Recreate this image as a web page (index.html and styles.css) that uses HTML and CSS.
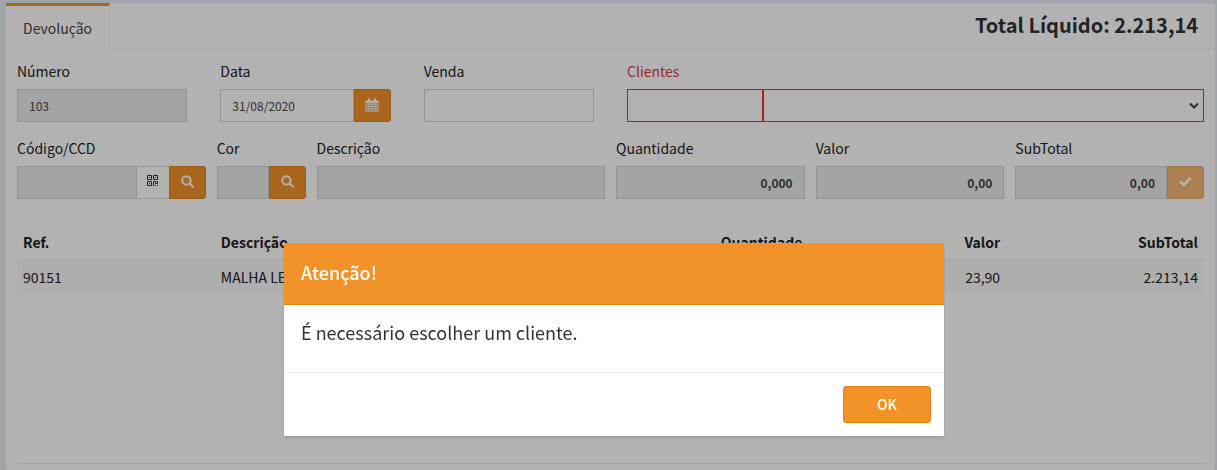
FILE: index.html
```html
<!DOCTYPE html>
<html lang="pt-BR">
<head>
  <meta charset="UTF-8">
  <meta name="viewport" content="width=device-width, initial-scale=1.0">
  <title>Devolução</title>
  <link rel="stylesheet" href="styles.css">
</head>
<body>
  <main class="panel">
    <header class="tabs">
      <a class="tab" href="#devolucao">Devolução</a>
      <h3 class="total">Total Líquido: 2.213,14</h3>
    </header>

    <form class="content" id="devolucao">
      <div class="row row-main">
        <div class="field">
          <label for="numero">Número</label>
          <input class="control" type="text" id="numero" value="103" disabled>
        </div>
        <div class="field">
          <label for="data">Data</label>
          <div class="group">
            <input class="control" type="text" id="data" value="31/08/2020">
            <button class="btn addon" type="button" aria-label="Abrir calendário">
              <svg viewBox="0 0 14 14" width="14" height="14" fill="none" stroke="currentColor">
                <path d="M1 3.2h12v10H1zM1 6.2h12M1 8.5h12M1 10.8h12M4 5v8M7 5v8M10 5v8" stroke-width=".9"/>
                <path d="M.6 3.8h12.8" stroke-width="2"/>
                <path d="M4 1.4v2M10 1.4v2" stroke-width="2.2" stroke-linecap="round"/>
              </svg>
            </button>
          </div>
        </div>
        <div class="field">
          <label for="venda">Venda</label>
          <input class="control" type="text" id="venda">
        </div>
        <div class="field span-3 has-error">
          <label for="cliente">Clientes</label>
          <div class="group client">
            <input class="control" type="text" id="cliente">
            <div class="select-wrap">
              <select class="control" aria-label="Nome do cliente">
                <option value=""></option>
              </select>
              <svg class="chevron" viewBox="0 0 10 8" width="10" height="8" fill="none" stroke="currentColor" stroke-width="2">
                <path d="M1 1.5l4 4 4-4"/>
              </svg>
            </div>
          </div>
        </div>
      </div>

      <div class="row row-item">
        <div class="field span-2">
          <label for="codigo">Código/CCD</label>
          <div class="group">
            <input class="control" type="text" id="codigo" disabled>
            <button class="addon addon-light" type="button" aria-label="Ler código">
              <svg viewBox="0 0 11 11" width="11" height="11" fill="none" stroke="currentColor">
                <path d="M.5.5h4v4h-4zM6.5.5h4v4h-4zM.5 6.5h4v4h-4z"/>
                <path d="M2 2.5h1M8 2.5h1M2 8.5h1M6.5 11V6.5h2v2h2V6M8 10.5h1M10 10.5h1"/>
              </svg>
            </button>
            <button class="btn addon" type="button" aria-label="Buscar produto">
              <svg viewBox="0 0 13 13" width="13" height="13" fill="none" stroke="currentColor" stroke-width="2">
                <circle cx="5.4" cy="5.4" r="4.2"/>
                <path d="M8.5 8.5l3.4 3.4" stroke-linecap="round"/>
              </svg>
            </button>
          </div>
        </div>
        <div class="field">
          <label for="cor">Cor</label>
          <div class="group">
            <input class="control" type="text" id="cor" disabled>
            <button class="btn addon" type="button" aria-label="Buscar cor">
              <svg viewBox="0 0 13 13" width="13" height="13" fill="none" stroke="currentColor" stroke-width="2">
                <circle cx="5.4" cy="5.4" r="4.2"/>
                <path d="M8.5 8.5l3.4 3.4" stroke-linecap="round"/>
              </svg>
            </button>
          </div>
        </div>
        <div class="field span-3">
          <label for="descricao">Descrição</label>
          <input class="control" type="text" id="descricao" disabled>
        </div>
        <div class="field span-2">
          <label for="quantidade">Quantidade</label>
          <input class="control number" type="text" id="quantidade" value="0,000" disabled>
        </div>
        <div class="field span-2">
          <label for="valor">Valor</label>
          <input class="control number" type="text" id="valor" value="0,00" disabled>
        </div>
        <div class="field span-2">
          <label for="subtotal">SubTotal</label>
          <div class="group">
            <input class="control number" type="text" id="subtotal" value="0,00" disabled>
            <button class="btn addon" type="button" aria-label="Adicionar item" disabled>
              <svg viewBox="0 0 13 11" width="13" height="11" fill="none" stroke="currentColor" stroke-width="2.8">
                <path d="M1.3 5.2l3.6 3.6 6.8-6.8"/>
              </svg>
            </button>
          </div>
        </div>
      </div>

      <table class="items">
        <thead>
          <tr>
            <th>Ref.</th>
            <th class="col-desc">Descrição</th>
            <th class="num">Quantidade</th>
            <th class="num">Valor</th>
            <th class="num">SubTotal</th>
          </tr>
        </thead>
        <tbody>
          <tr>
            <td>90151</td>
            <td>MALHA LE</td>
            <td></td>
            <td class="num">23,90</td>
            <td class="num">2.213,14</td>
          </tr>
        </tbody>
      </table>
      <hr class="divider">
    </form>
  </main>

  <div class="backdrop">
    <div class="modal" role="alertdialog" aria-modal="true" aria-labelledby="modalTitle">
      <h4 class="modal-header" id="modalTitle">Atenção!</h4>
      <p class="modal-body">É necessário escolher um cliente.</p>
      <div class="modal-footer">
        <button class="btn btn-ok" type="button">OK</button>
      </div>
    </div>
  </div>
</body>
</html>
```

FILE: styles.css
```css
* {
  box-sizing: border-box;
}
body {
  margin: 0;
  padding: 3px 2px 0 6px;
  min-height: 100vh;
  overflow: hidden;
  display: flex;
  background: #e6edf6;
  color: #222;
  font-family: "Noto Sans CJK JP", "Open Sans", sans-serif;
  font-size: 14px;
  line-height: 20px;
}
input, select, button {
  font: inherit;
}
.panel {
  flex: 1;
  background: #fff;
  border-radius: 3px;
}

/* Tabs */
.tabs {
  display: flex;
  justify-content: space-between;
  height: 47px;
  border-bottom: 1px solid #f1f1f1;
}
.tab {
  height: 47px;
  padding: 12px 17px 0;
  border-top: 3px solid #f39229;
  border-right: 1px solid #f1f1f1;
  background: #fff;
  color: #444;
  text-decoration: none;
}
.total {
  margin: 0;
  padding: 7px 17px 0 0;
  color: #333;
  font-size: 20px;
  line-height: 30px;
}

/* Form */
.content {
  padding: 11px 11px 0;
}
.row {
  display: grid;
}
.row-main {
  grid-template-columns: repeat(6, minmax(0, 1fr));
  gap: 33px;
  margin-bottom: 16px;
}
.row-item {
  grid-template-columns: repeat(12, minmax(0, 1fr));
  gap: 11px;
  margin-bottom: 27px;
}
.span-2 {
  grid-column: span 2;
}
.span-3 {
  grid-column: span 3;
}
.field label {
  display: block;
  margin-bottom: 8px;
}
.control {
  display: block;
  width: 100%;
  min-width: 0;
  height: 33px;
  padding: 0 11px 1px;
  border: 1px solid #cfd0dc;
  border-radius: 0;
  background: #fff;
  color: #444;
  font-size: 12px;
}
.control:disabled {
  background: #ebebeb;
  color: #444;
}
.number {
  text-align: right;
  font-weight: bold;
}
.group {
  display: flex;
}
.has-error label {
  color: #dd3c34;
}
.has-error .control {
  border-color: #dd3c34;
}
.client > .control {
  flex: 0 0 136px;
}
.select-wrap {
  position: relative;
  flex: 1;
}
.select-wrap select {
  appearance: none;
}
.chevron {
  position: absolute;
  right: 5px;
  top: 13px;
  color: #444;
  pointer-events: none;
}

/* Buttons */
.btn {
  border: 1px solid #dd831d;
  border-radius: 3px;
  background: #f39229;
  color: #fff;
}
.btn:disabled {
  opacity: .65;
}
.addon {
  display: flex;
  flex: none;
  align-items: center;
  justify-content: center;
  width: 37px;
  padding: 0 0 2px;
  border-radius: 0 3px 3px 0;
}
.addon-light {
  width: 32px;
  padding-bottom: 4px;
  border: 1px solid #d9d9df;
  border-width: 1px 0;
  border-radius: 0;
  background: #fff;
  color: #333;
}

/* Items */
.items {
  width: 100%;
  table-layout: fixed;
  border-collapse: collapse;
}
.items th, .items td {
  padding: 6px 6px 7px;
  text-align: left;
}
.items th {
  border-bottom: 2px solid #f4f4f4;
}
.items td {
  background: #f9f9f9;
}
.items .num {
  text-align: right;
}
.col-desc {
  width: 33.33%;
}
.divider {
  margin: 169px 0 0;
  border: 0;
  border-top: 1px solid #eaeaea;
}

/* Modal */
.backdrop {
  position: fixed;
  inset: 0;
  display: flex;
  justify-content: center;
  align-items: flex-start;
  padding: 243px 0 0 11px;
  background: rgba(0,0,0,0.3);
}
.modal {
  width: 660px;
  background: #fff;
  color: #333;
  box-shadow: 0 2px 3px rgba(0,0,0,0.125);
}
.modal-header {
  margin: 0;
  padding: 15px 17px 17px;
  border-bottom: 1px solid #dd831d;
  background: #f39229;
  color: #fff;
  font-size: 18px;
  font-weight: 500;
  line-height: 29px;
}
.modal-body {
  margin: 0;
  padding: 13px 17px 25px;
  font-size: 18px;
  line-height: 29px;
}
.modal-footer {
  display: flex;
  justify-content: flex-end;
  padding: 13px;
  border-top: 1px solid #eee;
}
.btn-ok {
  width: 88px;
  height: 37px;
  padding: 0 0 2px;
  font-weight: 500;
}
```
